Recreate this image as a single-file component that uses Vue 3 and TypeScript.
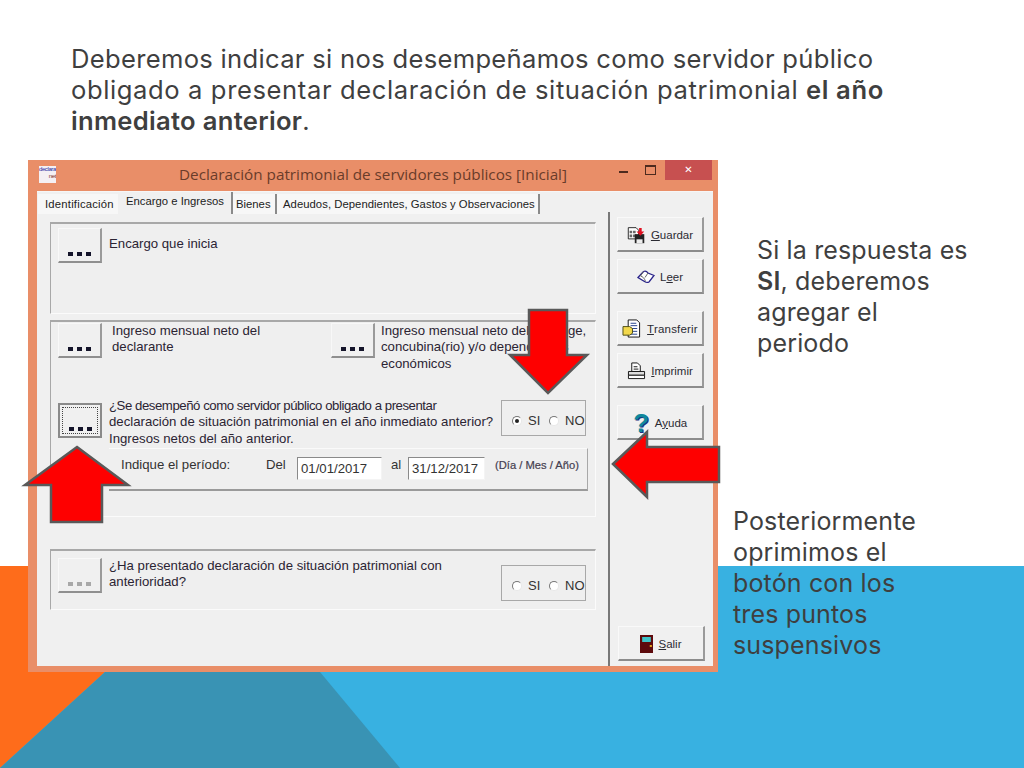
<script setup lang="ts">
const tabs: { label: string; active?: boolean }[] = [
  { label: 'Identificación' },
  { label: 'Encargo e Ingresos', active: true },
  { label: 'Bienes' },
  { label: 'Adeudos, Dependientes, Gastos y Observaciones' },
]
</script>

<template>
  <div class="slide">
    <svg class="backdrop" viewBox="0 0 1024 768" aria-hidden="true">
      <rect x="0" y="566" width="1024" height="202" fill="#38b1e1" />
      <polygon points="0,566 200,566 105,672 0,768" fill="#fe6c1b" />
      <polygon points="105,672 320,672 400,768 0,768" fill="#3993b4" />
    </svg>

    <h1 class="intro">
      <span class="l1">Deberemos indicar si nos desempeñamos como servidor público</span><br />
      <span class="l2">obligado a presentar declaración de situación patrimonial <b>el año</b></span><br />
      <b class="l3">inmediato anterior</b>.
    </h1>

    <div class="stage">
      <section class="window">
        <header class="titlebar">
          <span class="app-logo"><i>declara</i><i class="net">net</i></span>
          <span class="title">Declaración patrimonial de servidores públicos [Inicial]</span>
          <span class="controls">
            <span class="ctl min"></span>
            <span class="ctl max"></span>
            <span class="ctl close">✕</span>
          </span>
        </header>

        <div class="client">
          <div class="main-pane">
            <nav class="tabs">
              <span v-for="t in tabs" :key="t.label" class="tab" :class="{ active: t.active }">{{ t.label }}</span>
            </nav>

            <div class="panel panel-a">
              <button class="dots"><span class="dot-row"><i></i><i></i><i></i></span></button>
              <p class="label encargo">Encargo que inicia</p>
            </div>

            <div class="panel panel-b">
              <div class="income-row">
                <button class="dots"><span class="dot-row"><i></i><i></i><i></i></span></button>
                <p class="label income-own">Ingreso mensual neto del<br />declarante</p>
                <button class="dots"><span class="dot-row"><i></i><i></i><i></i></span></button>
                <p class="label income-other">Ingreso mensual neto del cónyuge,<br />concubina(rio) y/o dependientes<br />económicos</p>
              </div>

              <div class="question-row">
                <button class="dots focused"><span class="focus-ring"></span><span class="dot-row"><i></i><i></i><i></i></span></button>
                <p class="label question"><span class="tight">¿Se desempeñó como servidor público obligado a presentar</span><br />declaración de situación patrimonial en el año inmediato anterior?<br />Ingresos netos del año anterior.</p>
                <div class="radio-box">
                  <span class="radio checked"></span><span class="radio-text si">SI</span>
                  <span class="radio"></span><span class="radio-text">NO</span>
                </div>
              </div>

              <div class="period">
                <span class="period-label">Indique el período:</span>
                <span class="del">Del</span>
                <span class="date-input first">01/01/2017</span>
                <span class="al">al</span>
                <span class="date-input second">31/12/2017</span>
                <span class="hint">(Día / Mes / Año)</span>
              </div>
            </div>

            <div class="panel panel-c">
              <button class="dots disabled"><span class="dot-row"><i></i><i></i><i></i></span></button>
              <p class="label previous">¿Ha presentado declaración de situación patrimonial con<br />anterioridad?</p>
              <div class="radio-box lower">
                <span class="radio"></span><span class="radio-text si">SI</span>
                <span class="radio"></span><span class="radio-text">NO</span>
              </div>
            </div>
          </div>

          <aside class="actions">
            <button class="action">
              <svg width="19" height="18" viewBox="0 0 22 20">
                <path d="M1.500 1.500h9l3 3v10h-12z" fill="#fff" stroke="#111" />
                <path d="M3 5h3v3H3zM7 5h3v3H7zM3 9.500h3v3H3zM7 9.500h3v3H7z" fill="#666" />
                <rect x="9" y="9" width="11" height="10.500" fill="#222" />
                <rect x="11" y="15" width="7" height="4.500" fill="#eee" />
                <path d="M14 2h3v4h3l-4.500 5L11 6h3z" fill="#e01020" />
              </svg>
              <span><u>G</u>uardar</span>
            </button>
            <button class="action">
              <svg width="18" height="14" viewBox="0 0 18 14">
                <path d="M1 7.500 6.500 1.500c2-.8 3.500 0 4.500 1.500l6 2.500-5 6.500c-1.500.8-3 .5-4.500-.5z" fill="#fff" stroke="#29238a" stroke-width="1.300" />
                <path d="M6.500 1.500 3.500 6c2 .5 4 2 5 5.500M11 3 8 7.500" fill="none" stroke="#666" />
              </svg>
              <span>L<u>e</u>er</span>
            </button>
            <button class="action spaced">
              <svg width="20" height="19" viewBox="0 0 21 20">
                <path d="M6.500 1h9l3 3v15h-12z" fill="#fff" stroke="#111" />
                <path d="M9 4.500h6M9 7h7M9 10h7M9 13h7M9 16h7" stroke="#24408a" />
                <path d="M1 8h7l3 2v5l-3 2H1z" fill="#f2d84c" stroke="#4a4a12" />
              </svg>
              <span class="wide"><u>T</u>ransferir</span>
            </button>
            <button class="action">
              <svg width="19" height="18" viewBox="0 0 20 19">
                <path d="M5 1h6l3 3v6H5z" fill="#fff" stroke="#111" />
                <path d="M7 5h4M7 7.500h5" stroke="#111" />
                <path d="M1.500 10h17v4h-17z" fill="#ddd" stroke="#111" />
                <path d="M1.500 14h17v3.500h-17z" fill="#fff" stroke="#111" />
              </svg>
              <span><u>I</u>mprimir</span>
            </button>
            <button class="action spaced">
              <span class="help-mark">?</span>
              <span>A<u>y</u>uda</span>
            </button>
            <button class="action exit">
              <svg width="13" height="18" viewBox="0 0 12 18" preserveAspectRatio="none">
                <rect width="12" height="18" fill="#5d0a0c" />
                <rect x="2" y="2" width="8" height="5" fill="#3fc3c8" />
                <rect x="9" y="10" width="2" height="2" fill="#e0a020" />
              </svg>
              <span><u>S</u>alir</span>
            </button>
          </aside>
        </div>
      </section>

      <div class="notes">
        <p class="note answer">Si la respuesta es<br /><b>SI</b>, deberemos<br />agregar el<br />periodo</p>
        <p class="note next">Posteriormente<br />oprimimos el<br />botón con los<br />tres puntos<br />suspensivos</p>
      </div>
    </div>

    <svg class="arrows" viewBox="0 0 1024 768" aria-hidden="true">
      <g fill="#fe0000" stroke="#595959" stroke-width="2.500" stroke-linejoin="miter">
        <polygon points="529,310 567,310 567,355 587,355 548,393 510,355 529,355" />
        <polygon points="77,447 128,485 102,485 102,522 51,522 51,485 25,485" />
        <polygon points="613,464 647,432 647,447 719,447 719,482 647,482 647,497" />
      </g>
    </svg>
  </div>
</template>

<style>
html, body { margin: 0; background: #fff; }
</style>

<style scoped>
.slide {
  position: relative;
  width: 1024px;
  height: 768px;
  overflow: hidden;
  background: #fff;
  font-family: "Liberation Sans", Arial, sans-serif;
}
.backdrop, .arrows {
  position: absolute;
  inset: 0;
  width: 1024px;
  height: 768px;
}
.arrows { pointer-events: none; z-index: 2; }

.intro {
  position: relative;
  box-sizing: border-box;
  height: 160px;
  margin: 0;
  padding: 43px 0 0 71px;
  font: 400 25.600px/31px Inter, sans-serif;
  letter-spacing: 0.3px;
  color: #3f3f3f;
  white-space: nowrap;
}
.intro b, .note b { font-weight: 600; }
.l2 { letter-spacing: 0.6px; }

.stage {
  position: relative;
  display: flex;
  padding-left: 28px;
}

.window {
  box-sizing: border-box;
  display: flex;
  flex-direction: column;
  width: 690px;
  height: 512px;
  padding: 0 5px 6px 9px;
  background: #e98e68;
  flex: none;
}
.titlebar {
  display: flex;
  align-items: center;
  height: 31px;
  flex: none;
  position: relative;
}
.app-logo {
  display: flex;
  flex-direction: column;
  width: 17px;
  height: 17px;
  margin: -3px 0 0 2px;
  background: #f4f0f4;
  font: 6px/7px "Liberation Sans", sans-serif;
  color: #2a2aa0;
  overflow: hidden;
}
.app-logo i { font-style: normal; letter-spacing: -0.4px; }
.app-logo .net { color: #7a3020; text-align: right; }
.title {
  margin: -3px 0 0 123px;
  font: 15.250px "Open Sans", sans-serif;
  color: #6a3c2a;
  white-space: nowrap;
}
.controls {
  margin-left: auto;
  align-self: flex-start;
  display: flex;
  align-items: flex-start;
}
.ctl { display: block; box-sizing: border-box; }
.min { width: 9px; height: 2px; margin: 11px 17px 0 0; background: #4d2a1e; }
.max { width: 11px; height: 10px; margin: 5px 9px 0 0; border: 1px solid #4d2a1e; border-top-width: 2px; }
.close {
  width: 47px;
  height: 20px;
  margin-right: 1px;
  background: #c75050;
  color: #fff;
  font: 700 10px/19px "DejaVu Sans", sans-serif;
  text-align: center;
}

.client {
  flex: 1;
  display: flex;
  min-height: 0;
  background: #f0f0f0;
  box-shadow: inset 0 1px 0 #f6f6f6;
}
.main-pane { width: 571px; flex: none; }

.tabs {
  display: flex;
  align-items: flex-start;
  height: 22px;
  padding: 1px 0 0 1px;
  box-sizing: border-box;
  margin-bottom: 9px;
}
.tab {
  box-sizing: border-box;
  height: 20px;
  margin-top: 2px;
  padding: 0 3px 0 7px;
  font: 11.300px/20px "Liberation Sans", sans-serif;
  color: #222;
  background: #f7f7f7;
  border-right: 2px solid #8a8a8a;
  white-space: nowrap;
}
.tab:first-child { width: 80px; border-right: 0; letter-spacing: 0.2px; }
.tab:nth-child(2) { width: 115px; padding-left: 8px; }
.tab:nth-child(3) { width: 44px; padding-left: 3px; }
.tab:nth-child(4) { width: 263px; padding-left: 6px; letter-spacing: 0.04px; }
.tab.active {
  margin-top: 0;
  height: 22px;
  background: #f0f0f0;
  line-height: 19px;
}

.panel {
  box-sizing: border-box;
  width: 546px;
  margin-left: 13px;
  border: 1px solid #fbfbfb;
  border-top: 2px solid #a8a8a8;
  border-left: 1px solid #a8a8a8;
  background: #efefef;
  position: relative;
}
.panel-a { display: flex; height: 92px; padding: 4px 0 0 7px; margin-bottom: 6px; }
.panel-b { height: 197px; padding: 1px 0 0 7px; margin-bottom: 32px; }
.panel-c { display: flex; height: 61px; padding: 7px 0 0 7px; }

.dots {
  position: relative;
  box-sizing: border-box;
  flex: none;
  display: flex;
  align-items: flex-end;
  justify-content: center;
  width: 44px;
  height: 35px;
  padding: 0 0 5px;
  background: #f0f0f0;
  border: 1px solid #d4d4d4;
  border-top-color: #f8f8f8;
  border-left-color: #f8f8f8;
  border-bottom: 2px solid #8f8f8f;
  border-right: 2px solid #9a9a9a;
  border-radius: 0;
}
.dot-row { display: flex; gap: 4px; }
.dot-row i { display: block; width: 5px; height: 4px; background: #14142a; }
.dots.disabled .dot-row i { background: #a8a8a8; }
.dots.focused { border: 2px solid #8a8a8a; }
.focus-ring {
  position: absolute;
  inset: 2px;
  border: 1px dotted #444;
}

.label {
  margin: 0;
  font: 13.200px/16.300px "Liberation Sans", sans-serif;
  color: #2b2433;
  white-space: nowrap;
}
.encargo { margin: 8px 0 0 7px; }

.income-row {
  display: flex;
  align-items: flex-start;
  height: 77px;
}
.income-own { width: 219px; margin-left: 10px; }
.income-other { margin-left: 6px; }

.question-row {
  display: flex;
  align-items: flex-start;
}
.question-row .dots { margin-top: 3px; }
.question { width: 392px; margin: -2px 0 0 7px; }
.tight { letter-spacing: -0.45px; }

.radio-box {
  box-sizing: border-box;
  display: flex;
  align-items: center;
  width: 85px;
  height: 36px;
  padding: 5px 0 0 10px;
  border: 1px solid #a8a8a8;
  font: 13px "Liberation Sans", sans-serif;
  color: #333;
}
.radio {
  box-sizing: border-box;
  position: relative;
  flex: none;
  width: 10px;
  height: 10px;
  border-radius: 50%;
  background: #fff;
  border: 1px solid #e8e8e8;
  border-top-color: #777;
  border-left-color: #777;
}
.radio.checked::after {
  content: "";
  position: absolute;
  inset: 2px;
  border-radius: 50%;
  background: #222;
}
.radio-text { margin-left: 6px; white-space: nowrap; }
.radio-text.si { width: 21px; }
.lower { margin: 7px 0 0 auto; margin-right: 9px; }

.period {
  box-sizing: border-box;
  display: flex;
  align-items: flex-start;
  width: 479px;
  height: 43px;
  margin: 1px 0 0 51px;
  padding: 8px 0 0 12px;
  border-top: 1px solid #fafafa;
  border-right: 1px solid #a8a8a8;
  border-bottom: 2px solid #9a9a9a;
  font: 13.200px/16px "Liberation Sans", sans-serif;
  color: #333;
  white-space: nowrap;
}
.period-label { width: 145px; }
.del { width: 31px; }
.date-input {
  box-sizing: border-box;
  height: 23px;
  padding-left: 3px;
  background: #fff;
  border: 1px solid #f4f4f4;
  border-top-color: #8a8a8a;
  border-left-color: #8a8a8a;
  line-height: 22px;
}
.first { width: 85px; }
.al { margin-left: 9px; width: 17px; }
.second { width: 77px; }
.hint { margin-left: 10px; font-size: 11.200px; color: #44404f; -webkit-text-stroke: 0.2px #44404f; }

.previous { margin: 0 0 0 7px; }

.actions {
  flex: 1;
  box-sizing: border-box;
  display: flex;
  flex-direction: column;
  gap: 7px;
  margin-top: 21px;
  padding: 5px 0 5px 7px;
  border-left: 2px solid #787878;
}
.action {
  box-sizing: border-box;
  display: flex;
  align-items: center;
  justify-content: center;
  gap: 5px;
  width: 87px;
  height: 35px;
  flex: none;
  padding: 1px 0 0;
  background: #f0f0f0;
  border: 1px solid #f9f9f9;
  border-bottom: 2px solid #8c8c8c;
  border-right: 2px solid #9a9a9a;
  font: 11.500px "Liberation Sans", sans-serif;
  color: #2b2b33;
  white-space: nowrap;
}
.action.spaced { margin-top: 10px; }
.action.exit { margin-top: auto; margin-left: 1px; }
.wide { letter-spacing: 0.2px; }
.help-mark {
  width: 17px;
  font: 700 26px/26px "Liberation Sans", sans-serif;
  color: #10889c;
  text-shadow: 1px 1px 0 #1b2e80;
}

.notes {
  width: 306px;
  flex: none;
  position: relative;
}
.note {
  margin: 0;
  font: 400 25px/31px Inter, sans-serif;
  letter-spacing: 0.15px;
  color: #3f3f3f;
  white-space: nowrap;
}
.answer { margin: 75px 0 0 39px; }
.next { margin: 147px 0 0 15px; }
</style>
